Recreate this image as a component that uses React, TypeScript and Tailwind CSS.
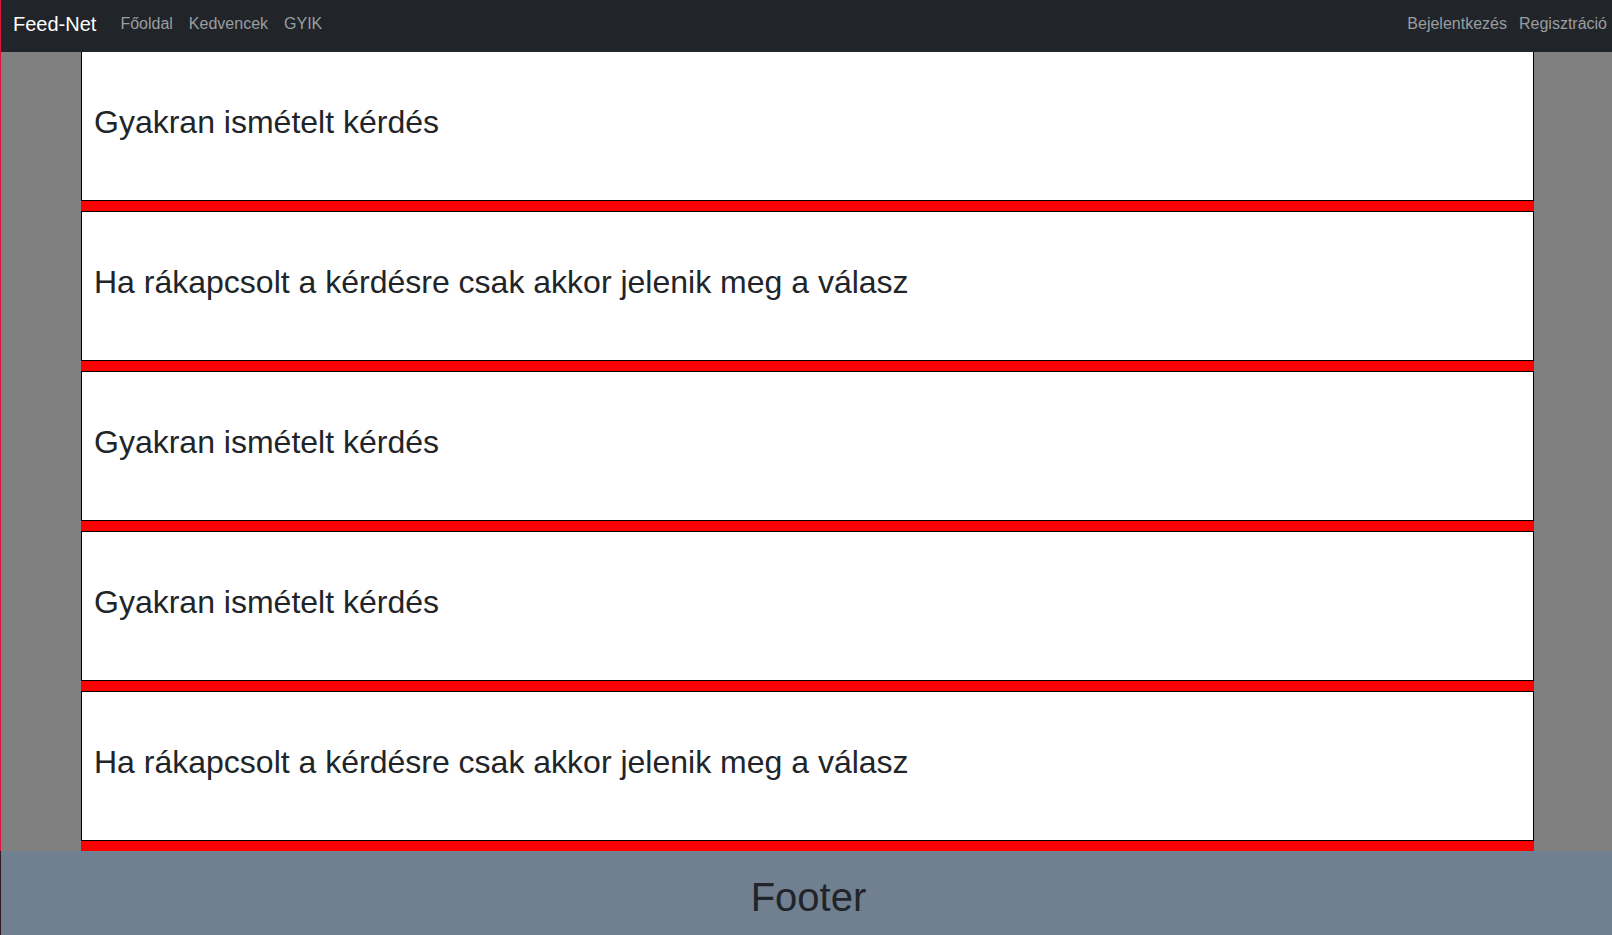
import React from "react";

const items = [
  "Gyakran ismételt kérdés",
  "Ha rákapcsolt a kérdésre csak akkor jelenik meg a válasz",
  "Gyakran ismételt kérdés",
  "Gyakran ismételt kérdés",
  "Ha rákapcsolt a kérdésre csak akkor jelenik meg a válasz",
];

export default function App() {
  return (
    <div
      className="w-[1612px] h-[935px] overflow-hidden flex flex-col"
      style={{ fontFamily: '"Liberation Sans", Arial, sans-serif' }}
    >
      <nav className="h-[52px] shrink-0 bg-[#212529] border-l border-[#dc143c] flex items-center justify-between pl-[12px] pr-[5px] pb-[4px]">
        <div className="flex items-center">
          <span className="text-[20px] text-white mr-[16px] leading-none">Feed-Net</span>
          <span className="text-[16px] text-[#9a9da0] px-[8px]">Főoldal</span>
          <span className="text-[16px] text-[#9a9da0] px-[8px]">Kedvencek</span>
          <span className="text-[16px] text-[#9a9da0] px-[8px]">GYIK</span>
        </div>
        <div className="flex items-center">
          <span className="text-[16px] text-[#9a9da0] px-[6px]">Bejelentkezés</span>
          <span className="text-[16px] text-[#9a9da0] pl-[6px]">Regisztráció</span>
        </div>
      </nav>
      <main className="flex-1 bg-[#808080] border-l border-[#dc143c] overflow-hidden">
        <div className="ml-[80px] w-[1453px] flex flex-col">
          {items.map((t, i) => (
            <div key={i} className={i === 0 ? "" : "border-t border-black"}>
              <div className="h-[148px] bg-white border-x border-black pl-[12px] pt-[51px]">
                <h2 className="text-[32px] leading-[1.2] text-[#212529]">{t}</h2>
              </div>
              <div className="h-[11px] bg-[#ff0000] border-t border-black" />
            </div>
          ))}
        </div>
      </main>
      <footer className="h-[84px] shrink-0 bg-[#708090] border-l border-[#2a1a24] flex justify-center pt-[22px] pl-[4px]">
        <h1 className="text-[40px] leading-[1.2] text-[#212529]">Footer</h1>
      </footer>
    </div>
  );
}
